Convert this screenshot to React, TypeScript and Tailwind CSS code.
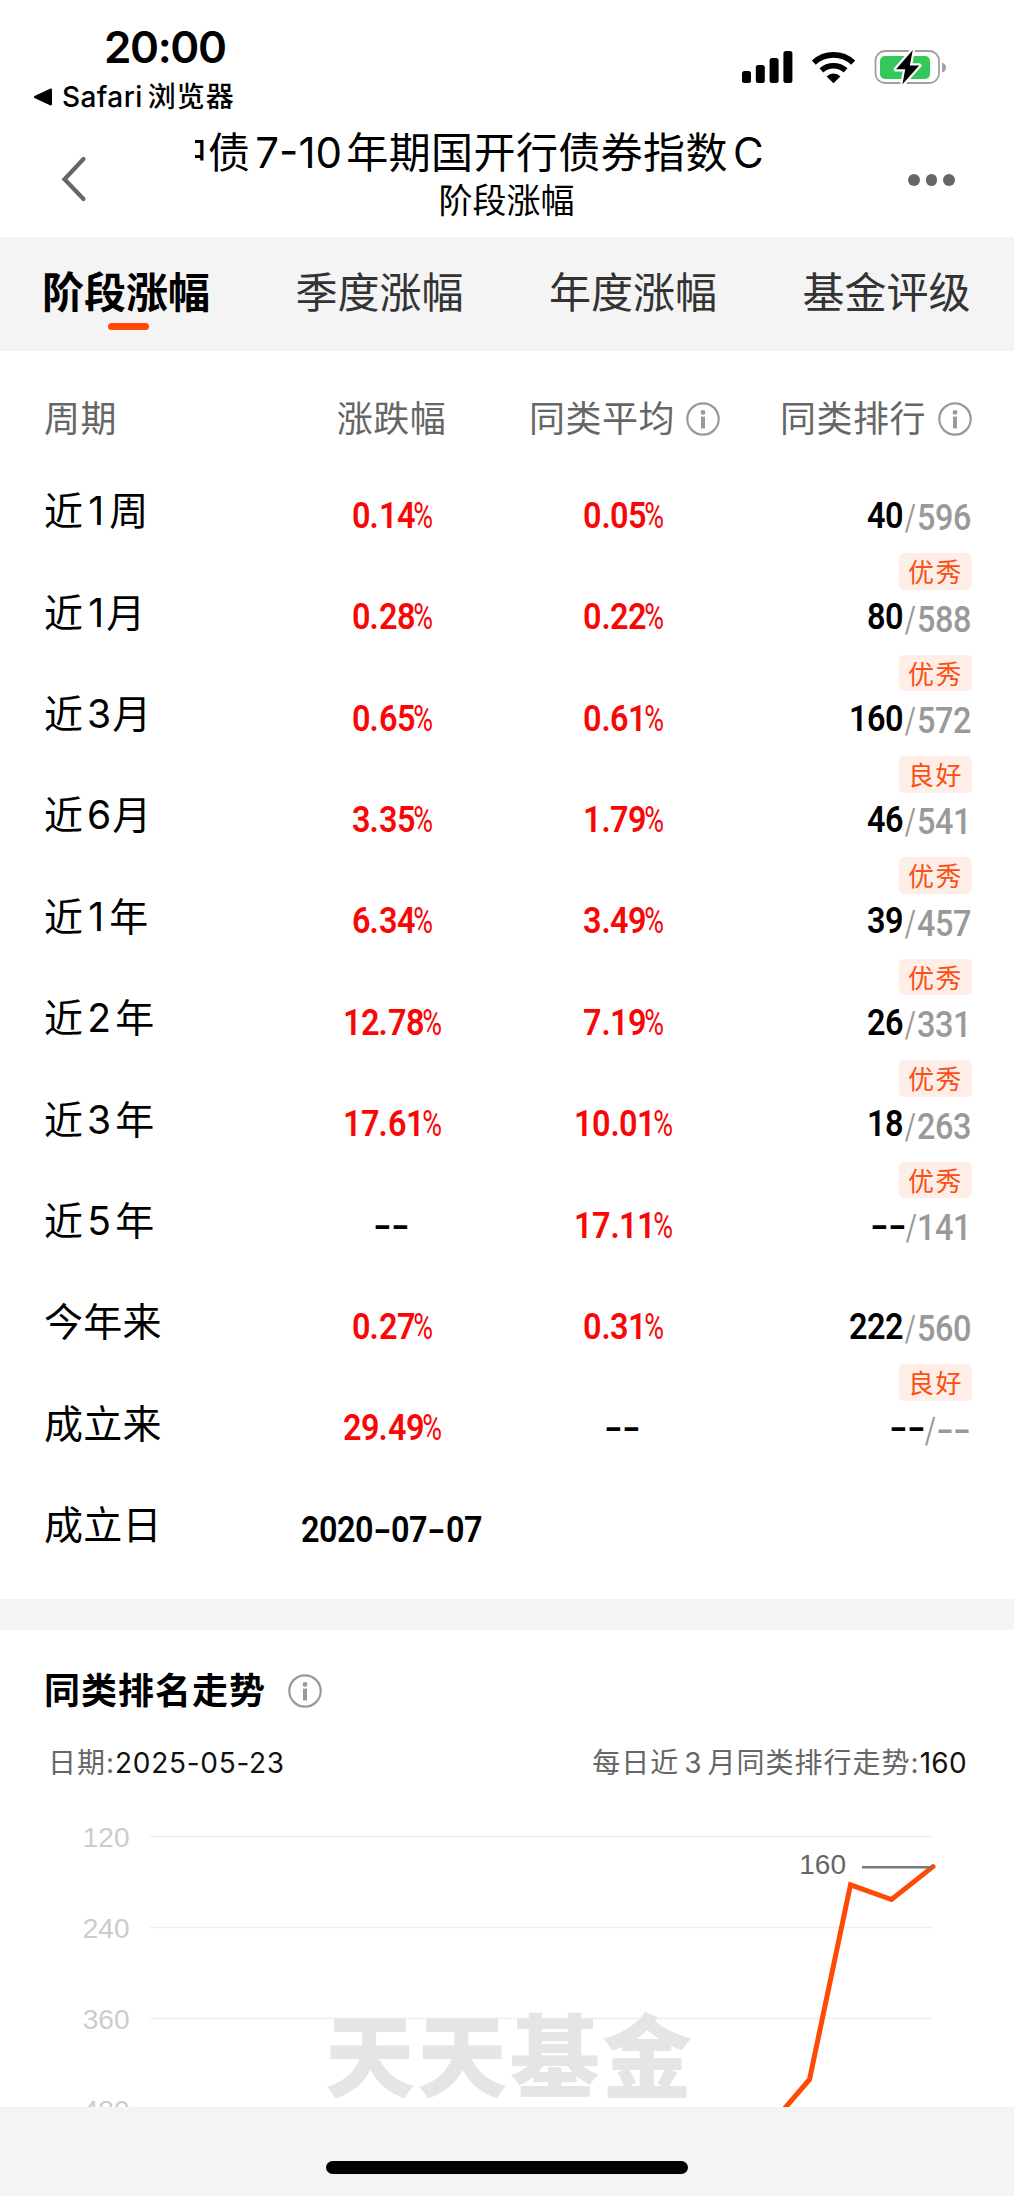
import { Fragment } from "react";

type Row = {
  period: string[];
  change: string;
  average: string;
  rank: string;
  total: string;
  badge?: string;
};

const rows: Row[] = [
  { period: ["近", "1", "周"], change: "0.14%", average: "0.05%", rank: "40", total: "596", badge: "优秀" },
  { period: ["近", "1", "月"], change: "0.28%", average: "0.22%", rank: "80", total: "588", badge: "优秀" },
  { period: ["近", "3", "月"], change: "0.65%", average: "0.61%", rank: "160", total: "572", badge: "良好" },
  { period: ["近", "6", "月"], change: "3.35%", average: "1.79%", rank: "46", total: "541", badge: "优秀" },
  { period: ["近", "1", "年"], change: "6.34%", average: "3.49%", rank: "39", total: "457", badge: "优秀" },
  { period: ["近", "2", "年"], change: "12.78%", average: "7.19%", rank: "26", total: "331", badge: "优秀" },
  { period: ["近", "3", "年"], change: "17.61%", average: "10.01%", rank: "18", total: "263", badge: "优秀" },
  { period: ["近", "5", "年"], change: "--", average: "17.11%", rank: "--", total: "141" },
  { period: ["今年来"], change: "0.27%", average: "0.31%", rank: "222", total: "560", badge: "良好" },
  { period: ["成立来"], change: "29.49%", average: "--", rank: "--", total: "--" },
  { period: ["成立日"], change: "2020-07-07", average: "", rank: "", total: "" },
];

const tabs = ["阶段涨幅", "季度涨幅", "年度涨幅", "基金评级"];

const axis = [120, 240, 360, 480];

function InfoIcon({ className }: { className: string }) {
  return (
    <svg viewBox="0 0 34 34" className={className} fill="none">
      <circle cx="17" cy="17" r="15.7" stroke="#999" strokeWidth="2.2" />
      <circle cx="17" cy="10.4" r="2.4" fill="#999" />
      <path d="M17 14.6v11.8" stroke="#999" strokeWidth="4" />
    </svg>
  );
}

// Narrow DIN-like figures: Roboto squeezed horizontally
function Figure({ value }: { value: string }) {
  if (!value) return null;

  if (value.includes("-")) {
    return (
      <span className="inline-flex text-black">
        {value.split("").map((c, i) => (
          <span key={i} className="w-[18.1px] flex justify-center">
            {c === "-" ? <span className="scale-x-140">-</span> : <span className="scale-x-90">{c}</span>}
          </span>
        ))}
      </span>
    );
  }

  return (
    <span className="inline-flex text-[#f90606]">
      {value.replace("%", "").split("").map((c, i) => (
        <span key={i} className={c === "." ? "w-[9px] flex justify-center" : "w-[18px] flex justify-center"}>
          <span className="scale-x-90">{c}</span>
        </span>
      ))}
      <span className="w-[16px] flex justify-center font-normal">
        <span className="scale-x-75">%</span>
      </span>
    </span>
  );
}

function Rank({ rank, total }: { rank: string; total: string }) {
  return (
    <div className="flex h-10 leading-10">
      {rank.split("").map((c, i) => (
        <span key={i} className={c === "-" ? "w-[17.5px] flex justify-center" : "w-[18px] flex justify-center"}>
          <span className={c === "-" ? "scale-x-140 text-black" : "scale-x-90 text-black"}>{c}</span>
        </span>
      ))}
      <span className="mt-[2.5px] flex font-medium text-[#999]">
        <span className={rank === "--" ? "w-[11px] flex justify-center font-normal" : "w-[13.5px] flex justify-center font-normal"}>
          <span className="scale-x-75">/</span>
        </span>
        {total.split("").map((c, i) => (
          <span key={i} className={c === "-" ? "w-[17.5px] flex justify-center" : "w-[18px] flex justify-center"}>
            <span className={c === "-" ? "scale-x-140" : "scale-x-90"}>{c}</span>
          </span>
        ))}
      </span>
    </div>
  );
}

function StatusBar() {
  return (
    <div className="flex h-[114px] justify-between">
      <div className="pt-[25px] pl-[33px]">
        <div className="pl-[71px] text-[44px] leading-[44px] font-semibold tracking-[-1.4px]">20:00</div>
        <div className="mt-[11px] flex h-[34px] items-center text-[28px] leading-[34px] font-medium">
          <svg className="mr-[10px] h-[18px] w-[19px]" viewBox="0 0 19 18">
            <path d="M1.5 8 Q0 9 1.5 10L17 17.2Q19 18 19 16V2Q19 0 17 .8Z" fill="#000" />
          </svg>
          <span className="tracking-[0.4px]">Safari</span>
          <span className="ml-[5px] tracking-[1px]">浏览器</span>
        </div>
      </div>
      <svg className="mt-12 mr-[66px] h-[38px] w-[207px]" viewBox="741 48 207 38">
        <rect x="742" y="71" width="9" height="12" rx="2.5" />
        <rect x="755.8" y="65" width="9" height="18" rx="2.5" />
        <rect x="769.6" y="58" width="9" height="25" rx="2.5" />
        <rect x="783.4" y="51" width="9" height="32" rx="2.5" />
        <g fill="none" stroke="#000">
          <path d="M813.8 62.6A29 29 0 0 1 853.2 62.6" strokeWidth="5.8" />
          <path d="M821.4 70.4A18 18 0 0 1 845.6 70.4" strokeWidth="5.6" />
        </g>
        <path d="M833.5 83.3L826.6 76.4A9.8 9.8 0 0 1 840.4 76.4Z" />
        <rect x="875.5" y="51" width="63.5" height="32" rx="9.5" fill="none" stroke="#a0a0a0" strokeWidth="1.8" />
        <rect x="880" y="56" width="50" height="23" rx="5" fill="#34c759" />
        <path d="M942 62.5Q946 64 946 67.5T942 72.5Z" fill="#a0a0a0" />
        <path
          d="M912.8 50L896 69.3H905.2L902.5 84.3L919.2 65.6H909.8Z"
          stroke="#fff"
          strokeWidth="4.5"
          strokeLinejoin="round"
          paintOrder="stroke"
        />
      </svg>
    </div>
  );
}

function TitleBar() {
  return (
    <div className="flex h-[123px]">
      <svg className="mt-[42px] ml-[60px] h-[46px] w-7 shrink-0" viewBox="60 156 28 46" fill="none">
        <path d="M83.5 159L64.5 179.3L83.5 199" stroke="#666" strokeWidth="4.2" strokeLinecap="round" />
      </svg>
      <div className="ml-[107px] w-[624px]">
        <div className="mt-[14px] overflow-hidden">
          <div className="-ml-[29.5px] flex text-[42px] leading-[50px] tracking-[0.4px] whitespace-nowrap">
            <span>中债</span>
            <span className="ml-[5px] w-[91px] tracking-[0px]">7-10</span>
            <span>年期国开行债券指数</span>
            <span className="ml-[5px]">C</span>
          </div>
        </div>
        <div className="mt-[3px] pl-[243.5px] text-[34px] leading-10">阶段涨幅</div>
      </div>
      <div className="mt-[60px] ml-[89px] flex h-3 gap-[6px]">
        <span className="size-[11.5px] rounded-full bg-[#666]" />
        <span className="size-[11.5px] rounded-full bg-[#666]" />
        <span className="size-[11.5px] rounded-full bg-[#666]" />
      </div>
    </div>
  );
}

function PeriodTable() {
  return (
    <div className="h-[1248px] pl-11 text-black">
      <div className="grid h-[109.3px] grid-cols-[232px_231px_232px_232px] pt-11 text-[36px] leading-[48px] tracking-[0.5px] whitespace-nowrap text-[#666]">
        <span>周期</span>
        <span className="text-center">涨跌幅</span>
        <span className="flex pl-[22px]">
          同类平均
          <InfoIcon className="mt-[6.5px] ml-[11px] size-[34px] shrink-0" />
        </span>
        <span className="flex pl-[41px]">
          同类排行
          <InfoIcon className="mt-[6.5px] ml-[11.5px] size-[34px] shrink-0" />
        </span>
      </div>
      {rows.map((row) => (
        <div
          key={row.period.join("")}
          className="grid h-[101.4px] grid-cols-[232px_231px_232px_232px] font-['Roboto','Liberation_Sans',sans-serif] text-[36px] font-semibold"
        >
          <div className="flex pt-[26px] font-['Inter','Noto_Sans_CJK_SC',sans-serif] text-[39px] leading-[50px] font-normal tracking-[0.3px]">
            {row.period.map((part, i) => {
              if (i !== 1) return <span key={i} className={part === "月" ? "-ml-[3px]" : ""}>{part}</span>;
              return (
                <span key={i} className={part === "1" ? "flex w-[26px] justify-center" : "flex w-8 justify-center"}>
                  {part}
                </span>
              );
            })}
          </div>
          <div className="flex justify-center pt-[35.5px] leading-10">
            <Figure value={row.change} />
          </div>
          <div className="flex justify-center pt-[35.5px] leading-10">
            <Figure value={row.average} />
          </div>
          {row.rank && (
            <div className="flex flex-col items-end pt-[35.5px]">
              <Rank rank={row.rank} total={row.total} />
              {row.badge && (
                <span className="mt-[17.5px] -mr-px h-[36.5px] w-[73px] shrink-0 rounded-[5px] bg-[#ffede7] text-center font-['Inter','Noto_Sans_CJK_SC',sans-serif] text-[26px] leading-[39px] font-normal tracking-[1.5px] text-[#fa4f14]">
                  {row.badge}
                </span>
              )}
            </div>
          )}
        </div>
      ))}
    </div>
  );
}

function RankTrend() {
  return (
    <div className="h-[477px] overflow-hidden">
      <div className="flex pt-[37px] pl-11">
        <h2 className="text-[36px] leading-[48px] font-bold tracking-[1px]">同类排名走势</h2>
        <InfoIcon className="mt-[7.5px] ml-[22px] size-[34px]" />
      </div>
      <div className="mt-[28.5px] flex h-10 justify-between pr-[47px] pl-12 text-[28px] leading-10 tracking-[1px] text-[#666]">
        <span className="flex">
          日期:<span className="tracking-[0.7px] text-[#111]">2025-05-23</span>
        </span>
        <span className="flex">
          每日近<span className="mx-[5px]">3</span>月同类排行走势:
          <span className="tracking-[0.3px] text-[#111]">160</span>
        </span>
      </div>
      <svg className="block h-[323.5px] w-[1014px]" viewBox="0 1783.2 1014 323.5">
        {axis.map((value, i) => (
          <Fragment key={value}>
            <path d={`M150 ${1836.8 + i * 90.9}H933`} stroke="#f0f0f0" strokeWidth="1.5" />
            <text
              x="129.5"
              y={1847.3 + i * 90.9}
              textAnchor="end"
              fontSize="28"
              fill="#ccc"
              className="font-['Liberation_Sans',Arial,sans-serif]"
            >
              {value}
            </text>
          </Fragment>
        ))}
        <text
          x="325"
          y="2090"
          fontSize="90"
          fontWeight="900"
          fill="#e5e5e5"
          textLength="367"
          className="font-['Noto_Sans_CJK_SC',sans-serif]"
        >
          天天基金
        </text>
        <path
          d="M780 2114L809.5 2079.7L850.5 1885L891.5 1899.7L933 1866.8"
          fill="none"
          stroke="#ff4a05"
          strokeWidth="5"
          strokeLinecap="round"
        />
        <path d="M862 1867.5H932" stroke="#777" strokeWidth="2.6" />
        <text
          x="846"
          y="1874"
          textAnchor="end"
          fontSize="28"
          fill="#666"
          className="font-['Liberation_Sans',Arial,sans-serif]"
        >
          160
        </text>
      </svg>
    </div>
  );
}

export default function App() {
  return (
    <div className="h-[2196px] w-[1015px] overflow-hidden bg-white font-['Inter','Noto_Sans_CJK_SC',sans-serif] text-black">
      <div className="w-[1014px]">
        <StatusBar />
        <TitleBar />
        <div className="grid h-[114px] grid-cols-[253px_254px_253px_254px] bg-[#f4f4f4] text-[42px]">
          {tabs.map((tab, i) => (
            <div key={tab} className="flex flex-col items-center pt-[31px]">
              <span className={i === 0 ? "mr-px leading-[50px] font-bold text-black" : "mr-px leading-[50px] text-[#333]"}>
                {tab}
              </span>
              {i === 0 && <span className="mt-[4.5px] ml-[3px] h-[7.5px] w-[41px] rounded-full bg-[#ff4a05]" />}
            </div>
          ))}
        </div>
        <PeriodTable />
        <div className="h-[30.7px] bg-[#f4f4f4]" />
        <RankTrend />
        <div className="flex h-[89.3px] justify-center bg-[#f4f4f4] pt-[54.5px]">
          <div className="h-[13px] w-[362px] rounded-full bg-black" />
        </div>
      </div>
    </div>
  );
}
